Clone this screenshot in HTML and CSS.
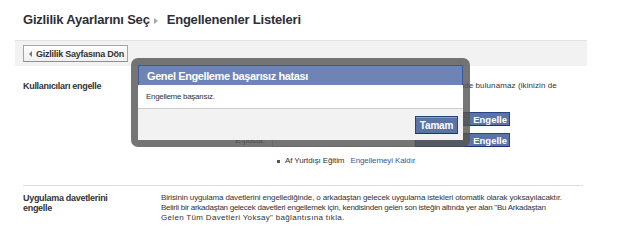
FILE: index.html
```html
<!DOCTYPE html>
<html lang="tr">
<head>
<meta charset="utf-8">
<title>Engellenenler Listeleri</title>
<link rel="stylesheet" href="styles.css">
</head>
<body>
<div class="page">
  <h1 class="title"><span>Gizlilik Ayarlarını Seç</span><span class="sep"></span><span>Engellenenler Listeleri</span></h1>
  <div class="toolbar">
    <button class="back"><span class="back-tri"></span>Gizlilik Sayfasına Dön</button>
  </div>

  <div class="section first">
    <div class="label">Kullanıcıları engelle</div>
    <div class="content">
      <p class="desc intro">Birisini engellediğinizde, o kişi arkadaşınız olamaz ve sizinle hiçbir şekilde etkileşimde bulunamaz (ikinizin de</p>
      <div class="form-row"><span class="flabel">Ad:</span><span class="finput"></span><button class="fbtn">Engelle</button></div>
      <div class="form-row"><span class="flabel">E-posta:</span><span class="finput"></span><button class="fbtn">Engelle</button></div>
      <ul class="blocked">
        <li><span class="bname">Af Yurtdışı Eğitim</span><a class="link">Engellemeyi Kaldır</a></li>
      </ul>
    </div>
  </div>

  <div class="section second">
    <div class="label">Uygulama davetlerini<br>engelle</div>
    <div class="content">
      <p class="desc"><span class="line l1">Birisinin uygulama davetlerini engellediğinde, o arkadaştan gelecek uygulama istekleri otomatik olarak yoksayılacaktır.</span><span class="line l2">Belirli bir arkadaştan gelecek davetleri engellemek için, kendisinden gelen son isteğin altında yer alan "Bu Arkadaştan</span><span class="line l3">Gelen Tüm Davetleri Yoksay" bağlantısına tıkla.</span></p>
    </div>
  </div>

  <div class="dialog">
    <div class="dialog-inner">
      <div class="dialog-head">Genel Engelleme başarısız hatası</div>
      <div class="dialog-body">Engelleme başarısız.</div>
      <div class="dialog-foot"><button class="ok">Tamam</button></div>
    </div>
  </div>
</div>
</body>
</html>
```

FILE: styles.css
```css
* { box-sizing: border-box; }
html, body { margin: 0; padding: 0; background: #fff; }
body { font-family: "Liberation Sans", Arial, sans-serif; color: #333; font-size: 8px; }

.page { position: relative; width: 620px; height: 228px; overflow: hidden; }

.title {
  margin: 0;
  padding: 13px 0 0 23px;
  height: 40px;
  font-size: 13px;
  line-height: 14px;
  font-weight: bold;
  letter-spacing: -0.2px;
  color: #2e2e38;
  display: flex;
  align-items: flex-start;
}
.title .sep {
  width: 0; height: 0;
  margin: 5px 9px 0 4px;
  border-left: 4px solid #a8a8a8;
  border-top: 3px solid transparent;
  border-bottom: 3px solid transparent;
}

.toolbar {
  margin-left: 15px;
  width: 572px;
  height: 26px;
  background: #f2f2f2;
  border-top: 1px solid #e2e2e2;
  padding: 4px 0 0 8px;
}
.back {
  display: flex;
  align-items: center;
  height: 17px;
  width: 105px;
  padding: 0 0 0 5px;
  margin: 0;
  font-family: inherit;
  font-size: 9px;
  font-weight: bold;
  letter-spacing: -0.25px;
  color: #333;
  background: linear-gradient(#ffffff, #f0f0f0);
  border: 1px solid #a5a5a5;
  border-bottom-color: #8e8e8e;
}
.back-tri {
  width: 0; height: 0;
  margin-right: 4px;
  border-right: 3px solid #777;
  border-top: 3px solid transparent;
  border-bottom: 3px solid transparent;
}

.section {
  display: grid;
  grid-template-columns: 138px 1fr;
  margin: 0 37px 0 23px;
}
.section.first { padding-top: 15px; height: 119px; }
.section.second { border-top: 1px solid #dcdcdc; padding-top: 7px; }

.label {
  font-size: 9px;
  font-weight: bold;
  letter-spacing: -0.3px;
  line-height: 10px;
  color: #333;
}
.desc {
  margin: 0;
  font-size: 8px;
  line-height: 10px;
  letter-spacing: -0.2px;
  white-space: nowrap;
  color: #333;
}
.desc.intro { letter-spacing: 0.1px; }
.line { display: block; }
.l1 { letter-spacing: -0.14px; }
.l2 { letter-spacing: -0.26px; }
.l3 { letter-spacing: 0.32px; }

.form-row {
  display: flex;
  align-items: center;
  height: 14px;
  margin-top: 7px;
}
.section.first .desc + .form-row { margin-top: 21px; }
.flabel {
  width: 104px;
  text-align: right;
  margin-right: 7px;
  font-size: 8px;
  color: #333;
}
.finput {
  width: 143px;
  height: 14px;
  border: 1px solid #bdc7d8;
  background: #fff;
}
.fbtn {
  margin: 0;
  width: 95px;
  height: 14px;
  padding: 0 2px 0 0;
  text-align: right;
  font-family: inherit;
  font-size: 9.5px;
  font-weight: bold;
  color: #fff;
  background: #5b74a8;
  border: 1px solid #29447e;
  border-bottom-color: #1a356e;
}

.blocked {
  list-style: none;
  margin: 9px 0 0 111px;
  padding: 0;
}
.blocked li {
  display: flex;
  align-items: center;
  font-size: 8px;
  line-height: 10px;
  letter-spacing: -0.1px;
}
.blocked li::before {
  content: "";
  width: 3px; height: 3px;
  background: #555;
  margin: 0 5px 0 5px;
}
.bname { color: #333; margin-right: 6px; }
.link { color: #3b5998; }

/* Dialog overlay */
.dialog {
  position: absolute;
  left: 131px;
  top: 58px;
  width: 339px;
  height: 89px;
  padding: 7px;
  border-radius: 7px;
  background: rgba(82, 82, 82, 0.8);
}
.dialog-inner {
  height: 75px;
  background: #fff;
  display: flex;
  flex-direction: column;
}
.dialog-head {
  height: 20px;
  padding-left: 8px;
  display: flex;
  align-items: center;
  background: #6d84b4;
  border: 1px solid #3b5998;
  border-bottom: none;
  color: #fff;
  font-size: 11px;
  font-weight: bold;
  letter-spacing: -0.4px;
}
.dialog-body {
  height: 23px;
  padding-left: 8px;
  display: flex;
  align-items: center;
  font-size: 8px;
  letter-spacing: -0.3px;
  color: #333;
}
.dialog-foot {
  flex: 1;
  background: #f2f2f2;
  border-top: 1px solid #cccccc;
  display: flex;
  justify-content: flex-end;
  align-items: flex-start;
  padding: 7px 5px 0 0;
}
.ok {
  width: 43px;
  height: 18px;
  padding: 0;
  font-family: inherit;
  font-size: 10px;
  font-weight: bold;
  letter-spacing: -0.2px;
  color: #fff;
  background: #5b74a8;
  border: 1px solid #29447e;
  border-bottom-color: #1a356e;
  box-shadow: inset 0 1px 0 #8a9cc2;
}
```
